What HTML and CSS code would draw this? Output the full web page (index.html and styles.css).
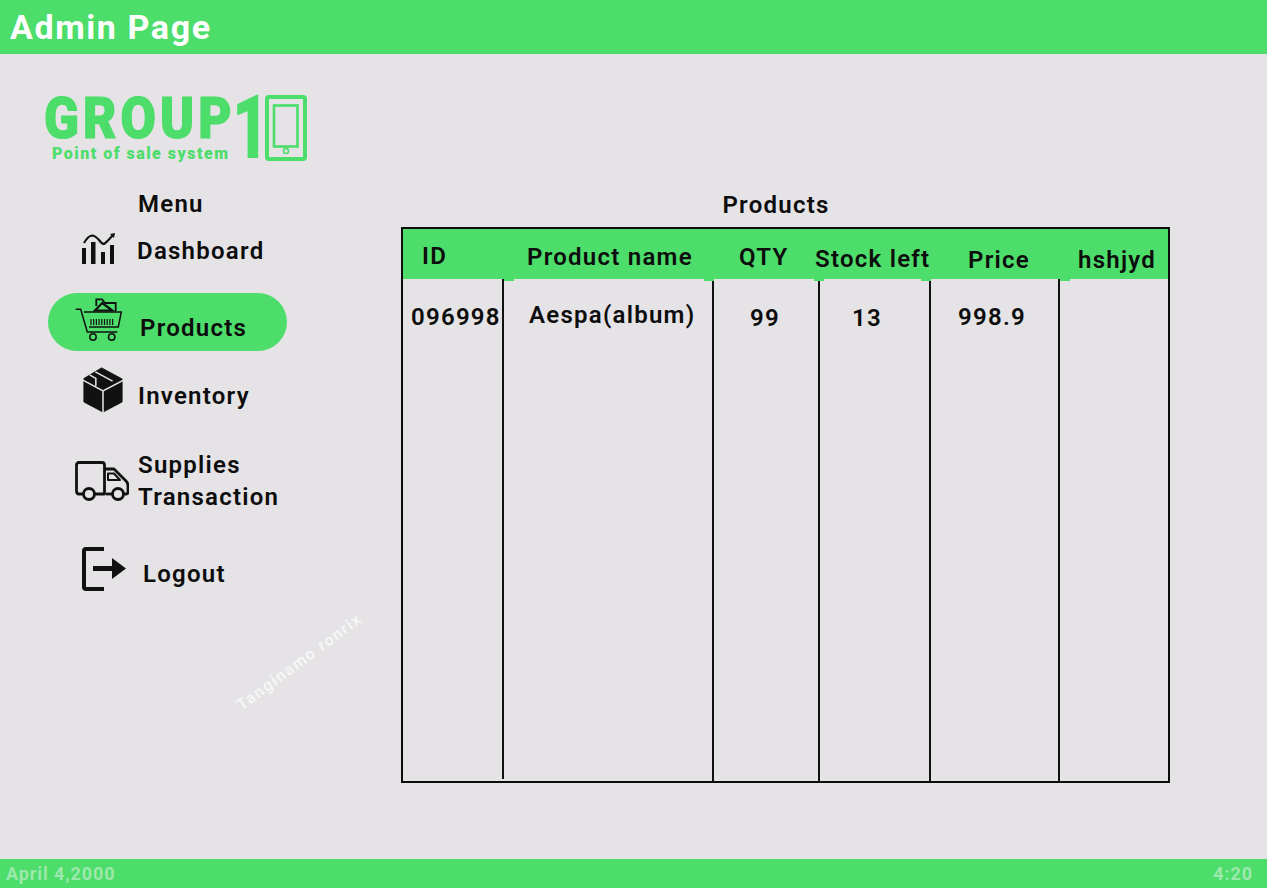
FILE: index.html
```html
<!DOCTYPE html>
<html lang="en">
<head>
	<meta charset="UTF-8">
	<title>Admin Page</title>
	<link rel="stylesheet" href="styles.css">
</head>
<body>
	<header class="topbar">Admin Page</header>
	<div class="main">
		<aside class="side">
			<div class="logo">
				<div class="logo-words">
					<div class="logo-name">GROUP</div>
					<div class="logo-sub">Point of sale system</div>
				</div>
				<div class="logo-one">1</div>
				<svg class="logo-phone" width="42" height="66" viewBox="0 0 42 66" fill="none" stroke="#4cdd6a">
					<rect x="2" y="2" width="38" height="62" rx="2" stroke-width="4"/>
					<rect x="9" y="10.500" width="23.500" height="41" stroke-width="2.600"/>
					<circle cx="21" cy="56" r="2.500" stroke-width="1.600"/>
				</svg>
			</div>
			<div class="menu-title">Menu</div>
			<nav class="menu">
				<a class="item item-dash" href="#">
					<svg class="ico" width="34" height="31" viewBox="0 0 34 31">
						<g fill="#111">
							<rect x="1" y="15" width="4" height="16"/>
							<rect x="10" y="9" width="4.500" height="22"/>
							<rect x="20" y="19" width="4" height="12"/>
							<rect x="29" y="12" width="4" height="19"/>
						</g>
						<path d="M3 10 Q7 3 11 2.500 Q14 2.500 18 7 Q21 11 23 11 Q25 10 32 2" fill="none" stroke="#111" stroke-width="2.200"/>
						<path d="M29 1 L34 0 L33 5 Z" fill="#111"/>
					</svg>
					<span>Dashboard</span>
				</a>
				<a class="item item-prod active" href="#">
					<svg class="ico" width="48" height="45" viewBox="0 0 48 45" fill="none" stroke="#111">
						<path d="M0.700 11.300 H5.700 L12.300 34 H42.300" stroke-width="1.500"/>
						<path d="M9 14 H46.300 L43.300 29 H14" stroke-width="1.500"/>
						<path d="M21.300 8 V1.300 H27 L30 5 H40.700 V13" stroke-width="1.800"/>
						<path d="M20 12.500 L27.300 5 L37.300 12.500 Z" stroke-width="2.200"/>
						<path d="M16 21 V27 M18.700 21 V27 M21.400 21 V27 M24.100 21 V27 M26.800 21 V27 M29.500 21 V27 M32.200 21 V27 M34.900 21 V27 M37.600 21 V27" stroke-width="1.200"/>
						<circle cx="18" cy="39" r="3.200" stroke-width="1.500"/>
						<circle cx="36.700" cy="39" r="3.200" stroke-width="1.500"/>
					</svg>
					<span>Products</span>
				</a>
				<a class="item item-inv" href="#">
					<svg class="ico" width="42" height="46" viewBox="0 0 44 52" preserveAspectRatio="none">
						<path d="M20.500 1 L42 13.500 V39.500 L22 51 L2 39.500 V13 Z" fill="#111" stroke="#111" stroke-linejoin="round"/>
						<path d="M0.500 14.500 L22 27 L44 14.500 M22 27 V52" fill="none" stroke="#e5e3e6" stroke-width="1.600"/>
						<path d="M8 9 L14.500 13 V21.500 M14 5.500 L32 16" fill="none" stroke="#e5e3e6" stroke-width="1.600"/>
					</svg>
					<span>Inventory</span>
				</a>
				<a class="item item-sup" href="#">
					<svg class="ico" width="54" height="40" viewBox="0 0 54 40" fill="none" stroke="#111" stroke-width="2.800" stroke-linejoin="round">
						<path d="M9 33 H4 Q1.500 33 1.500 30 V4 Q1.500 1.500 4 1.500 H27 Q29.500 1.500 29.500 4 V33 H20"/>
						<path d="M29.500 8 H39 L51 20 Q53 22 53 25 V31 Q53 33 51 33 H49"/>
						<path d="M31 33 H38"/>
						<path d="M33 12.500 H39 L45 19 H33 Z" stroke-width="2"/>
						<circle cx="14" cy="33" r="5.500"/>
						<circle cx="43" cy="33" r="5.500"/>
					</svg>
					<span>Supplies<br>Transaction</span>
				</a>
				<a class="item item-out" href="#">
					<svg class="ico" width="45" height="44" viewBox="0 0 45 44">
						<path d="M22 2 H4 Q2 2 2 4 V40 Q2 42 4 42 H22" fill="none" stroke="#111" stroke-width="4"/>
						<path d="M11 19 H30 V11 L44 21.500 L30 32 V24 H11 Z" fill="#111"/>
					</svg>
					<span>Logout</span>
				</a>
			</nav>
			<div class="stamp">Tanginamo ronrix</div>
		</aside>
		<section class="content">
			<h2 class="content-title">Products</h2>
			<div class="grid">
				<div class="head h-id">ID</div>
				<div class="head h-name">Product name</div>
				<div class="head h-qty">QTY</div>
				<div class="head h-stock">Stock left</div>
				<div class="head h-price">Price</div>
				<div class="head h-extra">hshjyd</div>
				<div class="cell c-id">096998</div>
				<div class="cell c-name">Aespa(album)</div>
				<div class="cell c-qty">99</div>
				<div class="cell c-stock">13</div>
				<div class="cell c-price">998.9</div>
				<div class="cell c-extra"></div>
			</div>
		</section>
	</div>
	<footer class="bottombar">
		<span>April 4,2000</span>
		<span>4:20</span>
	</footer>
</body>
</html>
```

FILE: styles.css
```css
*{box-sizing:border-box;}
html,body{margin:0;padding:0;}
body{width:1267px;height:888px;overflow:hidden;display:flex;flex-direction:column;background:#e5e3e6;color:#0d0d0d;font:600 24px/32px Roboto,"Liberation Sans",sans-serif;letter-spacing:1.250px;}
a{color:inherit;text-decoration:none;}

.topbar{height:54px;flex:none;background:#4cdd6a;color:#fff;font-size:34px;font-weight:700;line-height:54px;padding-left:10px;letter-spacing:1.600px;}
.bottombar{height:29px;flex:none;background:#4cdd6a;color:#9de9ac;font-size:18px;font-weight:700;line-height:29px;padding:0 14px 0 6px;display:flex;justify-content:space-between;letter-spacing:.9px;}
.main{flex:1;display:flex;min-height:0;}

.side{width:401px;flex:none;position:relative;padding:41px 0 0 44px;}
.logo{display:flex;align-items:flex-start;color:#4cdd6a;height:68px;}
.logo-words{width:191px;}
.logo-name{font:900 57px/44px Roboto,sans-serif;letter-spacing:4.500px;margin-top:2px;transform:scaleX(.9);transform-origin:0 0;white-space:nowrap;-webkit-text-stroke:1.200px #4cdd6a;}
.logo-sub{font:900 16px/20px Roboto,sans-serif;letter-spacing:1.500px;padding-left:8px;margin-top:3px;white-space:nowrap;}
.logo-one{font:900 89px/66px Roboto,sans-serif;width:30px;letter-spacing:0;transform:scaleX(.72);transform-origin:0 0;margin-left:-3px;margin-right:3px;}

.menu-title{margin:25px 0 0 94px;}
.menu{margin-top:7px;}
.item{display:flex;align-items:center;}
.item-dash{height:48px;margin-left:37px;gap:22px;}
.item-dash .ico{margin-bottom:5px;}
.item-prod{height:58px;width:239px;margin:18px 0 0 4px;padding-left:27px;gap:17px;border-radius:29px;background:#4cdd6a;}
.item-prod .ico{margin-bottom:4px;}
.item-prod span{margin-top:12px;}
.item-inv{height:50px;margin:14px 0 0 38px;gap:14px;}
.item-inv span{margin-top:12px;}
.item-sup{height:64px;margin:34px 0 0 31px;gap:9px;}
.item-out{height:46px;margin:33px 0 0 38px;gap:16px;}
.item-out span{margin-top:10px;}

.stamp{position:absolute;left:224px;top:599px;transform:rotate(-36.500deg);color:#fff;opacity:.7;font-size:16px;line-height:18px;white-space:nowrap;letter-spacing:1.600px;}

.content{flex:1;padding-top:136px;}
.content-title{margin:0 0 7px;width:750px;text-align:center;font:inherit;line-height:30px;}
.grid{width:769px;height:556px;border:2px solid #0d0d0d;display:grid;grid-template-columns:101px 210px 106px 111px 129px 108px;grid-template-rows:50px 1fr;}
.head{background:#4cdd6a;position:relative;white-space:nowrap;}
.h-id{padding:11px 0 0 19px;}
.h-name{padding:12px 0 0 23px;}
.h-qty{padding:12px 0 0 25px;}
.h-stock{padding:14px 0 0;text-indent:-5px;}
.h-price{padding:15px 0 0 37px;}
.h-extra{padding:15px 0 0 18px;}
/* little green tabs where the header meets the column lines */
.head::after{content:"";position:absolute;top:100%;width:10px;height:2px;background:#4cdd6a;z-index:1;}
.h-id::after{left:100%;}
.h-name::after{right:0;}
.h-qty::after{right:-4px;}
.h-stock::after{right:0;}
.h-price::after{left:100%;}
.h-extra::after{display:none;}
.cell{border-right:2px solid #111;white-space:nowrap;}
.c-id{padding:22px 0 0 8px;margin-bottom:2px;}
.c-name{padding:20px 0 0 25px;}
.c-qty{padding:23px 0 0 36px;}
.c-stock{padding:23px 0 0 32px;}
.c-price{padding:22px 0 0 27px;}
.c-extra{border-right:0;}
```
